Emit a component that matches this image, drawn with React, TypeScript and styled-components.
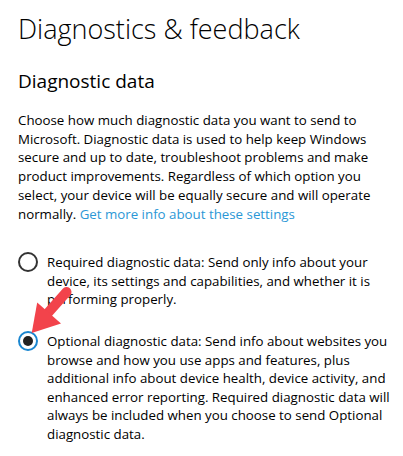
import { useState } from "react";
import styled, { createGlobalStyle } from "styled-components";

const GlobalStyle = createGlobalStyle`
    html, body {
        margin: 0;
        padding: 0;
        background: #ffffff;
    }
    body {
        font-family: "Open Sans", "Noto Sans", "Liberation Sans", sans-serif;
        color: #000000;
    }
`;

interface OptionType {
    value: string;
    label: string;
}

const options: OptionType[] = [
    {
        value: "required",
        label: "Required diagnostic data: Send only info about your device, its settings and capabilities, and whether it is performing properly.",
    },
    {
        value: "optional",
        label: "Optional diagnostic data: Send info about websites you browse and how you use apps and features, plus additional info about device health, device activity, and enhanced error reporting. Required diagnostic data will always be included when you choose to send Optional diagnostic data.",
    },
];

export default function App() {
    const [level, setLevel] = useState("optional");

    return (
        <>
            <GlobalStyle />
            <Page>
                <Title>Diagnostics &amp; feedback</Title>
                <SubTitle>Diagnostic data</SubTitle>
                <Description>
                    Choose how much diagnostic data you want to send to Microsoft. Diagnostic data is used to help keep
                    Windows secure and up to date, troubleshoot problems and make product improvements. Regardless of
                    which option you select, your device will be equally secure and will operate normally.{" "}
                    <Link href="#">Get more info about these settings</Link>
                </Description>
                <RadioGroup>
                    {options.map((v) => (
                        <RadioRow key={v.value} onClick={() => setLevel(v.value)}>
                            <RadioCircle $checked={level === v.value} />
                            <RadioLabel>{v.label}</RadioLabel>
                        </RadioRow>
                    ))}
                </RadioGroup>
                <Arrow width="60" height="60" viewBox="0 0 60 60">
                    <line x1="51.5" y1="12" x2="32" y2="34" stroke="#f2434b" strokeWidth="10" strokeLinecap="round" />
                    <polygon points="16.7,53 46,43.4 22.2,22.6" fill="#f2434b" />
                </Arrow>
            </Page>
        </>
    );
}

const Page = styled.div`
    position: relative;
    padding: 10px 12px 0 18px;
    box-sizing: border-box;
    width: 403px;
`;

const Title = styled.h1`
    margin: 0;
    font-size: 27px;
    line-height: 38px;
    font-weight: 300;
`;

const SubTitle = styled.h2`
    margin: 20px 0 0 0;
    font-size: 19px;
    line-height: 26px;
    font-weight: 400;
`;

const Description = styled.p`
    margin: 17px 0 0 0;
    font-size: 13.3px;
    line-height: 18.7px;
    width: 356px;
`;

const Link = styled.a`
    color: #2b97d6;
    text-decoration: none;
`;

const RadioGroup = styled.div`
    margin-top: 30px;
    display: flex;
    flex-direction: column;
    gap: 23.5px;
`;

const RadioRow = styled.div`
    display: flex;
    align-items: flex-start;
    gap: 9px;
    cursor: pointer;
`;

const RadioCircle = styled.span<{ $checked: boolean }>`
    flex: none;
    width: 20px;
    height: 20px;
    margin-top: -1px;
    border-radius: 50%;
    box-sizing: border-box;
    border: 2px solid ${(p) => (p.$checked ? "#1a86d0" : "#333333")};
    display: flex;
    align-items: center;
    justify-content: center;

    &::after {
        content: "";
        width: 10px;
        height: 10px;
        border-radius: 50%;
        background: #222222;
        display: ${(p) => (p.$checked ? "block" : "none")};
    }
`;

const RadioLabel = styled.span`
    font-size: 13.3px;
    line-height: 18.5px;
    flex: 1;
`;

const Arrow = styled.svg`
    position: absolute;
    left: 15px;
    top: 280px;
    pointer-events: none;
`;
